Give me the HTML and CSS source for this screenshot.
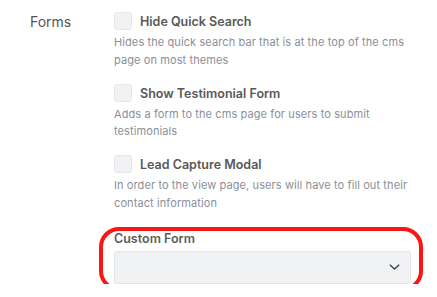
FILE: index.html
```html
<!DOCTYPE html>
<html>
<head>
<meta charset="utf-8">
<link rel="stylesheet" href="styles.css">
</head>
<body>
<div class="row">
  <div class="label">Forms</div>
  <div class="fields">
    <div class="option">
      <label class="check"><span class="box"></span><span class="title">Hide Quick Search</span></label>
      <p class="desc">Hides the quick search bar that is at the top of the cms page on most themes</p>
    </div>
    <div class="option">
      <label class="check"><span class="box"></span><span class="title">Show Testimonial Form</span></label>
      <p class="desc">Adds a form to the cms page for users to submit testimonials</p>
    </div>
    <div class="option">
      <label class="check"><span class="box"></span><span class="title">Lead Capture Modal</span></label>
      <p class="desc">In order to the view page, users will have to fill out their contact information</p>
    </div>
    <div class="select-field">
      <div class="select-label">Custom Form</div>
      <div class="select">
        <svg class="chev" width="11" height="6" viewBox="0 0 11 6"><path d="M0.8 0.7 L5.5 5 L10.2 0.7" fill="none" stroke="#444" stroke-width="1.4"/></svg>
      </div>
      <div class="highlight"></div>
    </div>
  </div>
</div>
</body>
</html>
```
FILE: styles.css
```css
html, body { margin: 0; padding: 0; background: #fff; }
body { font-family: "Inter", "Helvetica Neue", sans-serif; color: #555; }
.row { display: flex; padding-top: 12px; }
.label { width: 84px; padding-left: 30px; font-size: 14px; line-height: 18px; color: #555; padding-top: 1px; }
.fields { width: 297px; display: flex; flex-direction: column; }
.option { margin-bottom: 14.5px; }
.check { display: flex; align-items: center; gap: 8px; height: 18px; }
.box { width: 16px; height: 16px; border: 1px solid #e4e6e9; background: #f1f2f4; border-radius: 3px; flex: none; }
.title { font-size: 12.5px; font-weight: 600; color: #585858; padding-top: 1px; }
.desc { margin: 4px 0 0; font-size: 11px; letter-spacing: 0.1px; line-height: 17.5px; color: #8a8f97; }
.select-field { position: relative; margin-top: 3px; }
.select-label { font-size: 12.5px; font-weight: 600; color: #5c5c5c; line-height: 18px; margin-bottom: 3px; }
.select { height: 31px; border: 1px solid #e2e4e7; background: #f1f2f4; border-radius: 3px; display: flex; align-items: center; justify-content: flex-end; padding-right: 10px; }
.highlight { position: absolute; left: -15px; top: -3px; right: -12px; bottom: -7px; border: 4.5px solid #fb1616; border-radius: 20px; }
```
